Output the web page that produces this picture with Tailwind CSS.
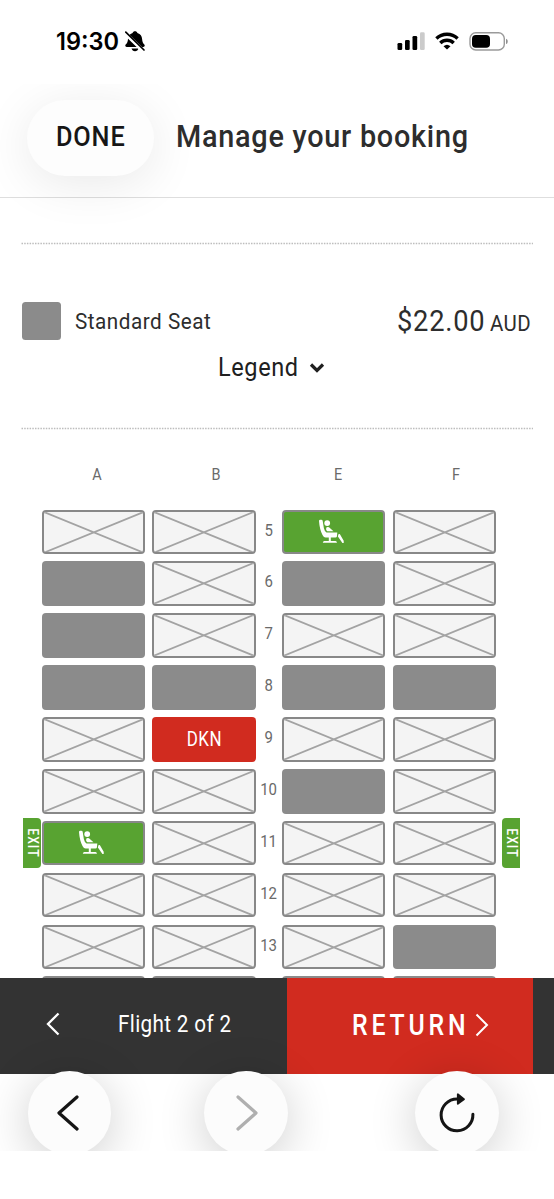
<!DOCTYPE html>
<html lang="en">
<head>
<meta charset="utf-8">
<title>Manage your booking</title>
<script src="https://cdn.jsdelivr.net/npm/@tailwindcss/browser@4"></script>
</head>
<body class="bg-white font-['Roboto',sans-serif] text-[#2d2d2d]">
<div class="flex h-[1199px] w-[554px] flex-col overflow-hidden">

  <div class="flex h-[84px] shrink-0 items-start pl-[56px] pr-[46px] pt-[26px] text-black">
    <span class="w-[66px] whitespace-nowrap font-['Inter',sans-serif] text-[24px] font-semibold leading-[32px]"><span class="inline-block origin-left scale-x-[0.98]">19:30</span></span>
    <svg class="ml-[3px] mt-[5px] h-[21px] w-[20px]" viewBox="0 0 20 21">
      <path d="M10 .3c1.200 0 2.100.6 2.400 1.600 3.200.9 4.500 3.300 4.700 6 .2 2.600.8 4.100 2.200 5.600.9 1 .3 2.500-1 2.500H1.700C.4 16-.2 14.500.7 13.500 2.300 12 2.800 10.500 3 7.900c.2-2.700 1.500-5.100 4.600-6C7.900.9 8.800.3 10 .3Z"/>
      <path d="M6.500 17.400h7c-.4 1.600-1.800 2.800-3.500 2.800s-3.100-1.200-3.500-2.800Z"/>
      <path d="M-.2 1.800 18.800 20.300" stroke="#fff" stroke-width="3.800"/>
      <path d="M.8 1.200 19 19" stroke="#000" stroke-width="1.700" stroke-linecap="round"/>
    </svg>
    <div class="ml-auto mt-[6px] flex items-start">
      <svg class="h-[19px] w-[28px]" viewBox="0 0 28 19">
        <rect x="0.500" y="11" width="4.700" height="7" rx="1.300"/>
        <rect x="8" y="8" width="4.700" height="10" rx="1.300"/>
        <rect x="15.500" y="4" width="4.700" height="14" rx="1.300"/>
        <rect x="23" y="0.300" width="4.700" height="17.700" rx="1.300" fill="#cbcbcb"/>
      </svg>
      <svg class="ml-[10px] h-[18px] w-[24px]" viewBox="0 0 24 18" fill="none" stroke="#000" stroke-width="3.400">
        <path d="M1.400 6.500a15.400 15.400 0 0 1 21.200 0"/>
        <path d="M5.300 11a9.700 9.700 0 0 1 13.400 0"/>
        <path d="M8.500 14.300a5.200 5.200 0 0 1 7 0L12 17.600Z" fill="#000" stroke="none"/>
      </svg>
      <svg class="ml-[10px] h-[19px] w-[39px]" viewBox="0 0 39 19">
        <rect x="1" y=".7" width="34.300" height="17.300" rx="5.800" fill="none" stroke="#9a9a9a" stroke-width="1.400"/>
        <rect x="3" y="2.900" width="18" height="12.900" rx="3.800"/>
        <path d="M37 6.700c2.300.8 2.300 4.600 0 5.400Z" fill="#8f8f8f"/>
      </svg>
    </div>
  </div>

  <header class="flex h-[114px] shrink-0 items-start border-b border-[#dedede] pl-[27px] pt-[16px] [clip-path:inset(0_0_-60px_0)]">
    <button class="flex h-[76px] w-[127px] shrink-0 items-center rounded-full bg-[#fdfdfd] pl-[29px] text-[27.500px] font-medium tracking-[0.900px] text-[#161616] shadow-[0_8px_50px_rgba(0,0,0,0.09)]"><span class="inline-block origin-left -translate-y-[1px] scale-x-[0.92] whitespace-nowrap">DONE</span></button>
    <h1 class="ml-[22px] mt-[17px] whitespace-nowrap text-[31px] font-medium leading-[40px] tracking-[0.800px]"><span class="inline-block origin-left scale-x-[0.93]">Manage your booking</span></h1>
  </header>

  <main class="flex h-[780px] shrink-0 flex-col overflow-hidden">
    <svg class="ml-[20px] mt-[44px] h-[3px] w-[514px] shrink-0" viewBox="0 0 514 3"><path d="M1.500 1.500H513" stroke="#bdbdbd" stroke-width="1.700" stroke-dasharray="1.500 1.200"/></svg>
    <div class="mt-[56.500px] flex h-[39px] shrink-0 items-center pl-[22px]">
      <div class="size-[38.500px] shrink-0 rounded-[3.500px] bg-[#8b8b8b]"></div>
      <div class="ml-[14px] w-[322.500px] shrink-0 whitespace-nowrap pt-px text-[22px] tracking-[0.550px]"><span class="inline-block origin-left scale-x-[0.94]">Standard Seat</span></div>
      <div class="flex items-baseline whitespace-nowrap pt-[2px] text-[29px]"><span class="w-[93px] tracking-[0.800px]"><span class="inline-block origin-left scale-x-[0.94]">$22.00</span></span><span class="inline-block origin-left scale-x-[0.93] text-[22px] tracking-[0.400px]">AUD</span></div>
    </div>
    <div class="mt-[10.500px] flex h-[34px] shrink-0 items-center pl-[218px] text-[25px] text-[#202020]">
      <span class="w-[91px] whitespace-nowrap tracking-[0.650px]"><span class="inline-block origin-left scale-x-[0.94]">Legend</span></span>
      <svg class="h-[12px] w-[17px]" viewBox="0 0 17 12"><path d="M2 2.500 8 8.500 14 2.500" fill="none" stroke="#202020" stroke-width="3.200"/></svg>
    </div>
    <svg class="ml-[20px] mt-[42px] h-[3px] w-[514px] shrink-0" viewBox="0 0 514 3"><path d="M1.500 1.500H513" stroke="#bdbdbd" stroke-width="1.700" stroke-dasharray="1.500 1.200"/></svg>
    <div class="mt-[34px] flex h-[22px] shrink-0 items-center pl-[45px] text-center text-[17px] text-[#6a6a6a]">
      <span class="w-[104px] scale-x-85">A</span><span class="ml-[15px] w-[104px] scale-x-85">B</span><span class="ml-[18px] w-[104px] scale-x-85">E</span><span class="ml-[14px] w-[104px] scale-x-85">F</span>
    </div>
    <div id="seats" class="mt-[23.500px] flex flex-col gap-[7.200px]"></div>
  </main>

  <footer class="flex h-[96.300px] shrink-0 bg-[#333] text-white">
    <div class="flex w-[287px] items-start pt-[34px]">
      <svg class="ml-[45px] h-[24px] w-[16px]" viewBox="0 0 16 24"><path d="M13.500 1.500 3 12 13.500 22.500" fill="none" stroke="#fff" stroke-width="2.300"/></svg>
      <span class="ml-[57px] whitespace-nowrap text-[23.500px] leading-[25px] tracking-[0.400px]"><span class="inline-block origin-left scale-x-[0.88]">Flight 2 of 2</span></span>
    </div>
    <div class="flex w-[246px] items-start bg-[#d12b1f] pl-[65px] pt-[31px]">
      <span class="w-[123px] shrink-0 whitespace-nowrap text-[29px] font-medium leading-[32px] tracking-[4.500px]"><span class="inline-block origin-left scale-x-[0.855]">RETURN</span></span>
      <svg class="mt-[4px] h-[24px] w-[16px]" viewBox="0 0 16 24"><path d="M1.500 1.500 12 12 1.500 22.500" fill="none" stroke="#fff" stroke-width="2"/></svg>
    </div>
  </footer>

  <nav class="flex h-[76.700px] shrink-0 pl-[27.500px] [clip-path:inset(-70px_0_0_0)]">
    <button class="-mt-[3px] flex size-[83.500px] shrink-0 items-center justify-center rounded-full bg-[#fcfcfc] shadow-[0_8px_48px_rgba(0,0,0,0.2)]">
      <svg class="h-[38px] w-[24px]" viewBox="0 0 24 38"><path d="M20 3 2 19 20 35" fill="none" stroke="#151515" stroke-width="3.200" stroke-linecap="round" stroke-linejoin="round"/></svg>
    </button>
    <button class="-mt-[3px] ml-[93px] flex size-[83.500px] shrink-0 items-center justify-center rounded-full bg-[#fcfcfc] shadow-[0_8px_48px_rgba(0,0,0,0.2)]">
      <svg class="h-[38px] w-[24px]" viewBox="0 0 24 38"><path d="M4 3 22 19 4 35" fill="none" stroke="#afafaf" stroke-width="3.200" stroke-linecap="round" stroke-linejoin="round"/></svg>
    </button>
    <button class="-mt-[3px] ml-[127.500px] flex size-[83.500px] shrink-0 items-center justify-center rounded-full bg-[#fcfcfc] shadow-[0_8px_48px_rgba(0,0,0,0.2)]">
      <svg class="h-[40px] w-[38px]" viewBox="0 0 38 40"><path d="M20 6H19a15.900 15.900 0 1 0 15.900 15.300" fill="none" stroke="#151515" stroke-width="3" stroke-linecap="round"/><path d="M19.800 1.200v9.600l6.200-4.600Z" fill="#151515" stroke="#151515" stroke-width="1.800" stroke-linejoin="round"/></svg>
    </button>
  </nav>
  <div class="grow bg-white"></div>
</div>

<script>
  const taken = `<div class="h-[44.700px] w-[103.600px] shrink-0 overflow-hidden rounded-[4px] border-2 border-[#888] bg-[#f4f4f4]"><svg class="size-full" viewBox="0 0 100 41" preserveAspectRatio="none"><path d="M0 0 100 41M100 0 0 41" stroke="#a3a3a3" stroke-width="1.800"/></svg></div>`;
  const standard = `<div class="h-[44.700px] w-[103.600px] shrink-0 rounded-[4px] bg-[#8b8b8b]"></div>`;
  const upfront = `<div class="flex h-[44.700px] w-[103.600px] shrink-0 items-start rounded-[4px] border-2 border-[#888] bg-[#58a331] pl-[34.500px] pt-[7px]"><svg class="h-[26px] w-[28px]" viewBox="0 0 28 26" fill="#fff"><path d="M1 2Q1 .7 2.300.7H3.300Q4.600.7 4.700 2L5.900 9.300Q6.600 12.500 8.500 13.600H19.300L18.900 17.400Q18.700 18.500 17.500 18.500H12.800V22H17.500Q18.800 22.100 19 23.700H4.800Q5 22.100 6.300 22H10.800V18.500H7.600Q5.800 18.500 4.500 16 1.600 10.500 1 2Z"/><circle cx="9.200" cy="4.100" r="2.900"/><path d="M8.200 8.700Q9.500 7.300 11 8.300L15.500 12.300H9.300Q7.600 11.300 8.200 8.700ZM20.400 15.300 21.800 14.900 25.700 21.700V24H24.400L19.900 17.400Z"/></svg></div>`;
  const mine = `<div class="flex h-[44.700px] w-[103.600px] shrink-0 items-center justify-center rounded-[4px] bg-[#d12b1f] pt-px text-[19.500px] tracking-[0.600px] text-white"><span class="inline-block scale-x-[0.87]">DKN</span></div>`;
  const kinds = { x: taken, s: standard, u: upfront, m: mine };
  const plan = [[5, 'xxux'], [6, 'sxsx'], [7, 'sxxx'], [8, 'ssss'], [9, 'xmxx'], [10, 'xxsx'], [11, 'uxxx'], [12, 'xxxx'], [13, 'xxxs'], ['', 'ssss']];
  const exitLeft = `<span class="-mt-[2.700px] ml-[23.300px] flex h-[50px] w-[17.500px] shrink-0 items-center justify-center rounded-r-[4px] bg-[#58a331] text-[14px] font-medium tracking-[1.200px] text-white [writing-mode:vertical-rl]"><span class="inline-block scale-y-[0.87]">EXIT</span></span>`;
  const exitRight = `<span class="-mt-[2.700px] ml-[6.200px] flex h-[50px] w-[17.500px] shrink-0 items-center justify-center rounded-l-[4px] bg-[#58a331] text-[14px] font-medium tracking-[1.200px] text-white [writing-mode:vertical-rl]"><span class="inline-block scale-y-[0.87]">EXIT</span></span>`;
  document.getElementById('seats').innerHTML = plan.map(([n, row]) => {
    const s = [...row].map(k => kinds[k]);
    return `<div class="flex h-[44.700px] shrink-0"><div class="w-[41.700px] shrink-0">${n === 11 ? exitLeft : ''}</div><div class="flex gap-[7.200px]">${s[0]}${s[1]}</div><div class="flex w-[25.700px] justify-center pt-[9px] text-[17px] leading-[22px] text-[#6a6a6a]"><span class="inline-block scale-x-[0.88]">${n}</span></div><div class="flex gap-[7.200px]">${s[2]}${s[3]}</div>${n === 11 ? exitRight : ''}</div>`;
  }).join('');
</script>
</body>
</html>
